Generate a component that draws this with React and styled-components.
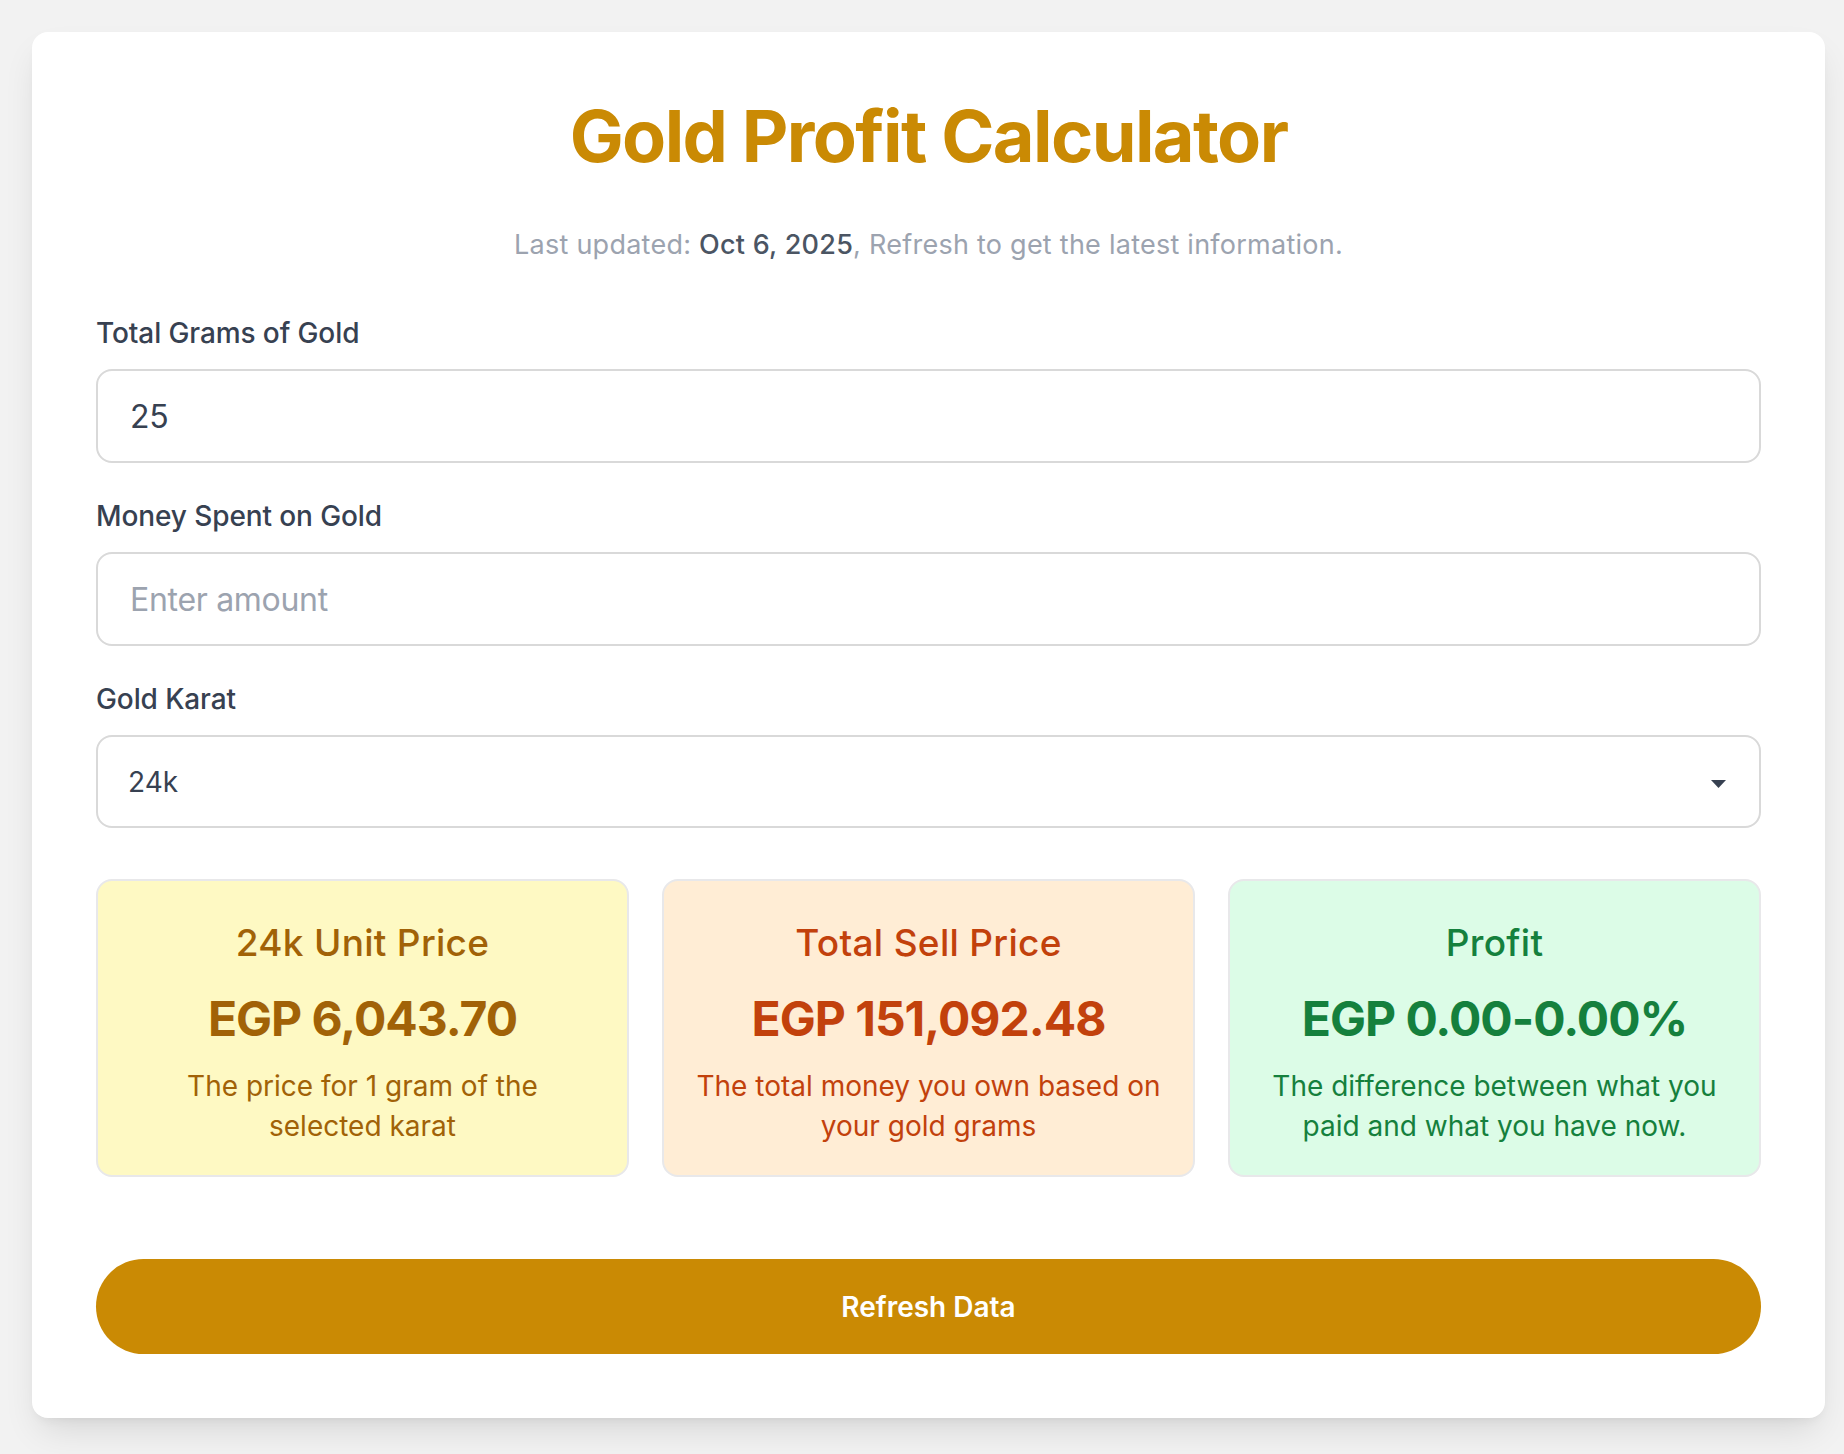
import { useState } from "react";
import styled, { createGlobalStyle } from "styled-components";

const GlobalStyle = createGlobalStyle`
	* {
		box-sizing: border-box;
	}
	body {
		margin: 0;
		background: #f2f2f2;
		font-family: "Inter", "Liberation Sans", sans-serif;
	}
`;

const results = [
	{
		key: "unit",
		title: "24k Unit Price",
		value: "EGP 6,043.70",
		desc: "The price for 1 gram of the selected karat",
		tone: "yellow",
	},
	{
		key: "sell",
		title: "Total Sell Price",
		value: "EGP 151,092.48",
		desc: "The total money you own based on your gold grams",
		tone: "orange",
	},
	{
		key: "profit",
		title: "Profit",
		value: "EGP 0.00-0.00%",
		desc: "The difference between what you paid and what you have now.",
		tone: "green",
	},
];

const tones = {
	yellow: { bg: "#fef9c3", fg: "#a16207" },
	orange: { bg: "#ffedd5", fg: "#c2410c" },
	green: { bg: "#dcfce7", fg: "#15803d" },
};

export default function App() {
	const [grams, setGrams] = useState("25");
	const [spent, setSpent] = useState("");
	const [karat, setKarat] = useState("24k");

	return (
		<>
			<GlobalStyle />
			<StyledPage>
				<Card>
					<Title>Gold Profit Calculator</Title>
					<Subtitle>
						Last updated: <strong>Oct 6, 2025</strong>, Refresh to get the latest
						information.
					</Subtitle>
					<Form>
						<Field>
							<Label>Total Grams of Gold</Label>
							<Input
								type="text"
								value={grams}
								onChange={(e) => setGrams(e.target.value)}
							/>
						</Field>
						<Field>
							<Label>Money Spent on Gold</Label>
							<Input
								type="text"
								placeholder="Enter amount"
								value={spent}
								onChange={(e) => setSpent(e.target.value)}
							/>
						</Field>
						<Field>
							<Label>Gold Karat</Label>
							<SelectWrap>
								<Select value={karat} onChange={(e) => setKarat(e.target.value)}>
									<option value="24k">24k</option>
									<option value="21k">21k</option>
									<option value="18k">18k</option>
								</Select>
								<Arrow width="15" height="8" viewBox="0 0 15 8">
									<path d="M0 0 H15 L7.5 8 Z" fill="#374151" />
								</Arrow>
							</SelectWrap>
						</Field>
					</Form>
					<ResultGrid>
						{results.map((r) => (
							<ResultCard key={r.key} $tone={r.tone}>
								<ResultTitle>{r.title}</ResultTitle>
								<ResultValue>{r.value}</ResultValue>
								<ResultDesc>{r.desc}</ResultDesc>
							</ResultCard>
						))}
					</ResultGrid>
					<RefreshButton>Refresh Data</RefreshButton>
				</Card>
			</StyledPage>
		</>
	);
}

const StyledPage = styled.div`
	min-height: 100vh;
	padding: 32px 19px 35px 32px;
`;

const Card = styled.div`
	background: #ffffff;
	border-radius: 16px;
	padding: 64px;
	box-shadow: 0 18px 36px -8px rgba(0, 0, 0, 0.12), 0 6px 12px -6px rgba(0, 0, 0, 0.08);
`;

const Title = styled.h1`
	margin: 0;
	text-align: center;
	color: #ca8a04;
	font-size: 72px;
	line-height: 80px;
	font-weight: 700;
	letter-spacing: -1.6px;
`;

const Subtitle = styled.p`
	margin: 49px 0 0;
	text-align: center;
	color: #9ca3af;
	font-size: 27px;
	line-height: 40px;
	letter-spacing: 0.25px;
	strong {
		color: #4b5563;
		font-weight: 500;
	}
`;

const Form = styled.div`
	margin-top: 48px;
	display: flex;
	flex-direction: column;
	gap: 33px;
`;

const Field = styled.div`
	display: flex;
	flex-direction: column;
	gap: 16px;
`;

const Label = styled.label`
	color: #374151;
	font-size: 28px;
	line-height: 40px;
	font-weight: 500;
	letter-spacing: -0.1px;
`;

const Input = styled.input`
	width: 100%;
	height: 94px;
	border: 2px solid #d9d9d9;
	border-radius: 16px;
	padding: 0 32px;
	font-family: inherit;
	font-size: 32px;
	letter-spacing: -0.3px;
	color: #374151;
	background: #ffffff;
	outline: none;
	&::placeholder {
		color: #9ca3af;
	}
`;

const SelectWrap = styled.div`
	position: relative;
`;

const Select = styled.select`
	appearance: none;
	width: 100%;
	height: 93px;
	border: 2px solid #d9d9d9;
	border-radius: 16px;
	padding: 0 30px;
	font-family: inherit;
	font-size: 28px;
	color: #374151;
	background: #ffffff;
	outline: none;
`;

const Arrow = styled.svg`
	position: absolute;
	right: 35px;
	top: 45px;
	pointer-events: none;
`;

const ResultGrid = styled.div`
	margin-top: 51px;
	display: grid;
	grid-template-columns: repeat(3, 1fr);
	gap: 33px;
`;

const ResultCard = styled.div`
	background: ${(p) => tones[p.$tone].bg};
	color: ${(p) => tones[p.$tone].fg};
	border: 2px solid #e8e8ea;
	border-radius: 16px;
	padding: 34px 32px 29px;
	text-align: center;
`;

const ResultTitle = styled.h3`
	margin: 0;
	font-size: 37px;
	line-height: 56px;
	font-weight: 500;
	letter-spacing: 0.3px;
`;

const ResultValue = styled.p`
	margin: 16px 0 0;
	font-size: 48px;
	line-height: 64px;
	font-weight: 700;
	letter-spacing: -1px;
`;

const ResultDesc = styled.p`
	margin: 15px 0 0;
	font-size: 28px;
	line-height: 40px;
	font-weight: 400;
`;

const RefreshButton = styled.button`
	margin-top: 82px;
	width: 100%;
	height: 95px;
	border: none;
	border-radius: 9999px;
	background: #ca8a04;
	color: #ffffff;
	font-family: inherit;
	font-size: 28px;
	font-weight: 600;
	cursor: pointer;
`;
